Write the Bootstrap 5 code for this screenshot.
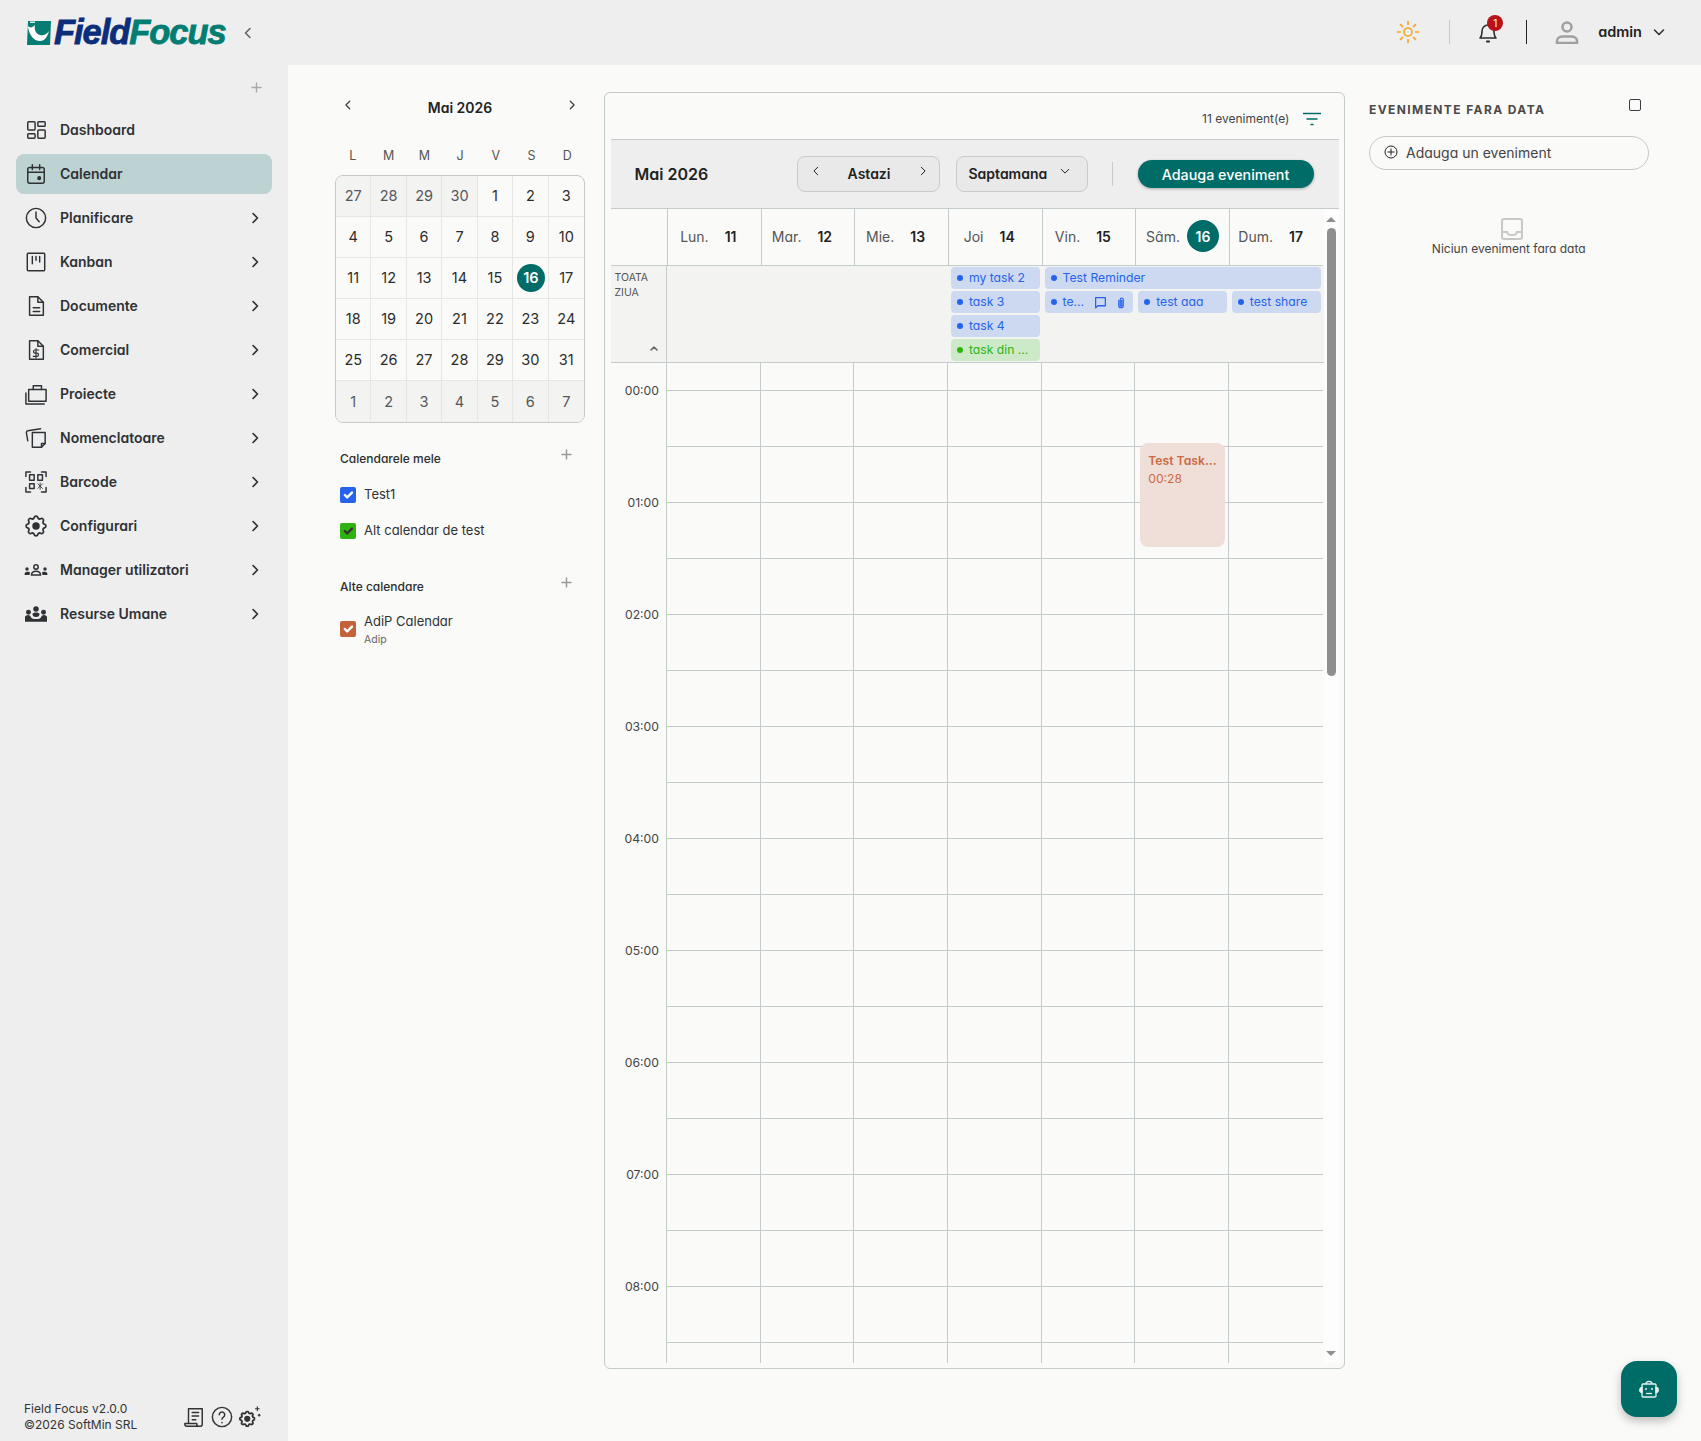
<!DOCTYPE html>
<html lang="ro">
<head>
<meta charset="UTF-8">
<meta name="viewport" content="width=device-width, initial-scale=1.0">
<title>Field Focus - Calendar</title>
<link href="https://cdn.jsdelivr.net/npm/bootstrap@5.3.0/dist/css/bootstrap.min.css" rel="stylesheet">
<style>
    html, body { height: 100%; }
    body { background: #fafaf8; color: #2b2d2f; font-family: "Inter", "Noto Sans", sans-serif; font-feature-settings: "cv11"; overflow: hidden; font-size: 14px; }
    svg { display: block; flex: none; }
    .ic { fill: none; stroke: currentColor; stroke-width: 1.6; stroke-linecap: round; stroke-linejoin: round; }

    .top-bar { height: 65px; background: #eeeeee; padding: 0 36px 0 27px; }
    .logo-word { font-family: "Liberation Sans", sans-serif; font-feature-settings: normal; font-weight: 700; font-style: italic; font-size: 34.5px; letter-spacing: -1.05px; line-height: 1; -webkit-text-stroke: .8px currentColor; }
    .logo-a { color: #0b2d7a; }
    .logo-b { color: #027d72; }
    .bar-sep { width: 1px; height: 24px; background: #c9c9c9; }
    .bar-sep-dark { background: #222; }
    .bell-badge { top: -5px; left: 10px; width: 16px; height: 16px; padding: 0; background: #b9121b; font-size: 10px; font-weight: 400; line-height: 16px; }
    .user-name { font-size: 14.5px; font-weight: 600; color: #222; }

    .page-body { height: calc(100% - 65px); }
    .side-bar { width: 288px; flex: none; background: #eeeeee; padding: 0 16px 0; }
    .side-plus { height: 45px; padding: 17px 10px 0 0; color: #a9a9a9; }
    .side-item { height: 40px; margin-bottom: 4px; padding: 0 11px 0 9px; border-radius: 8px; color: #2f3235; font-size: 14px; font-weight: 600; }
    .side-item.is-on { background: #bdd2d3; }
    .side-item .side-label { margin: -2px 0 0 13px; }
    .side-foot { padding: 0 8px 8px; font-size: 12px; line-height: 16px; font-feature-settings: normal; color: #333; }

    .mini-col { width: 315.5px; flex: none; padding-left: 47px; padding-right: 0; }
    .mini-head { height: 82px; padding: 31px 8px 0; }
    .mini-title { font-size: 14px; font-weight: 600; color: #222; padding-top: 1px; }
    .mini-week { display: grid; grid-template-columns: repeat(7, 1fr); height: 28px; font-size: 12.5px; line-height: 17px; color: #555; text-align: center; margin-bottom: 0; }
    .mini-grid { display: grid; grid-template-columns: repeat(7, 1fr); grid-auto-rows: 41px; width: 250px; border: 1px solid #c5c9c9; border-radius: 8px; overflow: hidden; background: #fafaf8; }
    .mini-cell { display: flex; align-items: center; justify-content: center; border-right: 1px solid #e6e6e5; border-bottom: 1px solid #e6e6e5; font-size: 14.5px; color: #2c2c2c; }
    .mini-cell:nth-child(7n) { border-right: 0; }
    .mini-cell:nth-last-child(-n+7) { border-bottom: 0; }
    .mini-cell.is-out { background: #f3f3f2; color: #55585a; }
    .mini-today { display: flex; align-items: center; justify-content: center; width: 28px; height: 28px; border-radius: 50%; background: #006c67; color: #fff; font-weight: 600; margin-left: 1px; }
    .cal-head { padding: 0 13px 0 5px; font-size: 12px; font-weight: 500; color: #2b2d2f; }
    .cal-plus { color: #9a9a9a; margin-top: -10px; }
    .cal-row { padding-left: 5px; font-size: 13px; color: #2f3133; }
    .cal-row .form-check-input { width: 16px; height: 16px; margin: 0 8px 0 0; border: 0; border-radius: 2px; float: none; flex: none; }
    .chk-blue { background-color: #2563eb !important; }
    .chk-green { background-color: #2fb312 !important; --bs-form-check-bg-image: url("data:image/svg+xml,%3csvg xmlns='http://www.w3.org/2000/svg' viewBox='0 0 20 20'%3e%3cpath fill='none' stroke='%23333' stroke-linecap='round' stroke-linejoin='round' stroke-width='3' d='m6 10 3 3 6-6'/%3e%3c/svg%3e") !important; }
    .chk-orange { background-color: #c4623a !important; }
    .cal-sub { font-size: 10.5px; color: #666; line-height: 14px; padding-top: 2px; }

    .week-card { width: 741px; height: 1277px; flex: none; margin-top: 27px; border: 1px solid #c3cbcb; border-radius: 6px; padding: 0 5px 0 6px; overflow: hidden; }
    .week-top { height: 46px; padding: 6px 18px 0 0; font-size: 12px; color: #444; }
    .week-tools { height: 70px; background: #eeeeee; border-top: 1px solid #c3cbcb; border-bottom: 1px solid #c3cbcb; padding: 0 24px; }
    .tools-title { font-size: 16px; font-weight: 600; color: #222; width: 162px; }
    .tool-btn { height: 36px; background: #e9e9e9; border: 1px solid #c8cccc; border-radius: 8px; font-size: 14px; font-weight: 600; color: #222; padding: 0 12px 2px; }
    .tool-btn .ic { stroke-width: 1.2; }
    .tool-today { width: 143px; margin-right: 16px; }
    .tool-view { width: 132px; }
    .tool-sep { width: 1px; height: 24px; background: #c3cbcb; margin: 0 25px 0 24px; }
    .add-btn { width: 176px; height: 28px; padding: 1px 0 0; border: 0; border-radius: 14px; background: #006c67; color: #fff; font-size: 14.3px; font-weight: 500; line-height: 27px; box-shadow: 0 1px 3px rgba(0,0,0,.3); }

    .week-wrap { height: 1154px; }
    .week-main { width: 713px; flex: none; }
    .week-grid { display: grid; grid-template-columns: 56.5px repeat(6, 93.65px) 94.6px; }
    .day-head { height: 57px; border-left: 1px solid #c3cbcb; border-bottom: 1px solid #c3cbcb; font-size: 14px; color: #555; padding: 0 12px 2px 0; }
    .gutter-head { border-left: 0; }
    .day-num { font-size: 14px; font-weight: 600; color: #222; }
    .day-circle { display: flex; align-items: center; justify-content: center; width: 32px; height: 32px; border-radius: 50%; background: #006c67; color: #fff; margin-left: -1px; }
    .allday-row { height: 97px; background: #f3f3f2; border-bottom: 1px solid #c3cbcb; }
    .allday-gutter { border-right: 1px solid #c3cbcb; padding: 4px 4px; font-size: 10.5px; line-height: 15px; color: #555; }
    .allday-up { right: 8px; bottom: 11px; color: #666; }
    .allday-events { display: grid; grid-template-columns: repeat(7, 93.65px); grid-auto-rows: 22px; row-gap: 2px; padding-top: 1px; }
    .ev-pill { height: 22px; margin: 0 2px 0 3px; padding: 0 6px; border-radius: 4px; font-size: 12.2px; line-height: 22px; background: #cdd9f1; color: #2563eb; white-space: nowrap; overflow: hidden; }
    .ev-pill.is-green { background: #cdeac8; color: #2fb312; }
    .ev-pill.is-end { margin-right: 1px; }
    .ev-dot { width: 6px; height: 6px; border-radius: 50%; background: currentColor; margin-right: 6px; flex: none; }
    .time-body { height: 1000px; overflow: hidden; }
    .time-gutter { border-right: 1px solid #c3cbcb; }
    .time-label { height: 112px; padding: 20px 7px 0 0; font-size: 12.2px; line-height: 16px; text-align: right; color: #444; }
    .time-day { position: relative; border-right: 1px solid #c3cbcb; }
    .time-day:last-child { border-right: 0; }
    .time-slot { height: 56px; border-bottom: 1px solid #c3cbcb; }
    .time-slot:first-child { height: 28px; }
    .task-block { top: 80px; left: 5px; width: 85px; height: 104px; padding: 9px 8px; background: #f0dfd8; border-radius: 8px; color: #cb6a45; font-size: 12.2px; line-height: 18px; }

    .fake-scroll { width: 15px; flex: none; background: #fdfdfd; padding-top: 8px; }
    .scroll-up { width: 0; height: 0; margin: 0 auto 6px; border: 5px solid transparent; border-top: 0; border-bottom: 5px solid #8f8f8f; }
    .scroll-thumb { width: 9px; height: 448px; margin: 0 auto; background: #8f8f8f; border-radius: 5px; }
    .scroll-down { width: 0; height: 0; margin: auto auto 7px; border: 5px solid transparent; border-bottom: 0; border-top: 5px solid #8f8f8f; }

    .undated { width: 279.5px; flex: none; margin: 27px 0 0 24.5px; }
    .undated-title { height: 44px; padding-top: 9px; font-size: 12px; font-weight: 700; letter-spacing: 1.4px; color: #4a4a4a; font-feature-settings: normal; }
    .undated-add { height: 34px; border: 1px solid #c3c9c9; border-radius: 17px; padding: 0 14px 2px; font-size: 14px; color: #444; }
    .undated-empty { margin-top: 47px; font-size: 12px; color: #444; }

    .bot-btn { position: fixed; left: 1621px; top: 1361px; width: 56px; height: 56px; padding: 0; border: 0; border-radius: 16px; background: #006c67; color: #e6f2f1; box-shadow: 0 4px 10px rgba(0,0,0,.25); }
</style>
</head>
<body>
    <svg width="0" height="0" style="position:absolute">
        <symbol id="i-gear" viewBox="2 2 20 20"><path d="M10.325 4.317c.426-1.756 2.924-1.756 3.35 0a1.724 1.724 0 0 0 2.573 1.066c1.543-.94 3.31.826 2.37 2.37a1.724 1.724 0 0 0 1.065 2.572c1.756.426 1.756 2.924 0 3.35a1.724 1.724 0 0 0-1.066 2.573c.94 1.543-.826 3.31-2.37 2.37a1.724 1.724 0 0 0-2.572 1.065c-.426 1.756-2.924 1.756-3.35 0a1.724 1.724 0 0 0-2.573-1.066c-1.543.94-3.31-.826-2.37-2.37a1.724 1.724 0 0 0-1.065-2.572c-1.756-.426-1.756-2.924 0-3.35a1.724 1.724 0 0 0 1.066-2.573c-.94-1.543.826-3.31 2.37-2.37 1 .608 2.296.07 2.572-1.065z"/><circle cx="12" cy="12" r="2.600" fill="currentColor"/></symbol>
        <symbol id="i-right" viewBox="0 0 12 12"><path d="M4 1.500 8.500 6 4 10.500"/></symbol>
        <symbol id="i-left" viewBox="0 0 12 12"><path d="M8 1.500 3.500 6 8 10.500"/></symbol>
        <symbol id="i-down" viewBox="0 0 12 12"><path d="M1.500 4 6 8.500 10.500 4"/></symbol>
        <symbol id="i-plus" viewBox="0 0 12 12"><path d="M6 1v10M1 6h10"/></symbol>
    </svg>

    <header class="top-bar d-flex align-items-center">
        <svg width="24" height="24" viewBox="0 0 24 24" style="margin-right:3px"><path d="M1 0h23l-1 24H0z" fill="#057d73"/><path d="M.800 5C2 14 7 20 13 20c4 0 7-3 9-10-3 4-6 5-9 4-4-1-6-5-5-10-3 3-5 3-7.200 1z" fill="#fff"/><path d="M3 0.500h5v1.500H3z" fill="#d7ece9"/></svg>
        <span class="logo-word"><span class="logo-a">Field</span><span class="logo-b">Focus</span></span>
        <svg width="12" height="12" class="ic" style="color:#666;margin-left:16px"><use href="#i-left"/></svg>
        <div class="ms-auto d-flex align-items-center" style="margin-top:-2px">
            <svg width="24" height="24" viewBox="0 0 24 24" class="ic" style="color:#f5a623"><circle cx="12" cy="12" r="4"/><path d="M12 1.500v3M12 19.500v3M1.500 12h3M19.500 12h3M4.600 4.600l2 2M17.400 17.400l2 2M4.600 19.400l2-2M17.400 6.600l2-2"/></svg>
            <div class="bar-sep" style="margin:0 27px 0 29px"></div>
            <div class="position-relative" style="margin-right:27px">
                <svg width="22" height="24" viewBox="0 0 22 24" class="ic" style="color:#2b2d2f"><path d="M3 18c2-2 2-4 2-7a6 6 0 0 1 12 0c0 3 0 5 2 7z"/><path d="M10 21.500h2" stroke-width="2.200"/></svg>
                <span class="badge rounded-circle position-absolute bell-badge">1</span>
            </div>
            <div class="bar-sep bar-sep-dark" style="margin-right:28px"></div>
            <svg width="24" height="24" viewBox="0 0 24 24" fill="none" stroke="#a0a0a0" stroke-width="2.500" style="margin-right:19px"><circle cx="12" cy="7" r="4.500"/><path d="M2 23v-2c0-3 3-4.500 6-4.500h8c3 0 6 1.500 6 4.500v2z"/></svg>
            <span class="user-name">admin</span>
            <svg width="12" height="12" class="ic" style="color:#333;margin-left:11px"><use href="#i-down"/></svg>
        </div>
    </header>

    <div class="page-body d-flex">
        <aside class="side-bar d-flex flex-column">
            <div class="side-plus d-flex justify-content-end"><svg width="11" height="11" class="ic" stroke-width="1"><use href="#i-plus"/></svg></div>
            <nav class="d-flex flex-column">
                <div class="side-item d-flex align-items-center">
                    <svg width="22" height="22" viewBox="0 0 24 24" class="ic"><rect x="3" y="3" width="8" height="9" rx="1"/><rect x="14" y="3" width="8" height="5" rx="1"/><rect x="3" y="16" width="8" height="5" rx="1"/><rect x="14" y="12" width="8" height="9" rx="1"/></svg>
                    <span class="side-label">Dashboard</span>
                </div>
                <div class="side-item is-on d-flex align-items-center">
                    <svg width="22" height="22" viewBox="0 0 24 24" class="ic"><rect x="3" y="5" width="18" height="17" rx="2"/><path d="M8 2v5M16 2v5M3 10h18"/><circle cx="15.500" cy="16.500" r="1.400" fill="currentColor"/></svg>
                    <span class="side-label">Calendar</span>
                </div>
                <div class="side-item d-flex align-items-center">
                    <svg width="22" height="22" viewBox="0 0 24 24" class="ic"><circle cx="12" cy="12" r="10.500"/><path d="M12 5.500V12l3.500 4"/></svg>
                    <span class="side-label">Planificare</span>
                    <svg width="12" height="12" class="ic ms-auto"><use href="#i-right"/></svg>
                </div>
                <div class="side-item d-flex align-items-center">
                    <svg width="22" height="22" viewBox="0 0 24 24" class="ic"><rect x="2.500" y="2.500" width="19" height="19" rx="1"/><path d="M8 6v8M12 6v4M16 6v6"/></svg>
                    <span class="side-label">Kanban</span>
                    <svg width="12" height="12" class="ic ms-auto"><use href="#i-right"/></svg>
                </div>
                <div class="side-item d-flex align-items-center">
                    <svg width="22" height="22" viewBox="0 0 24 24" class="ic"><path d="M5 2h9l6 6v14H5z"/><path d="M14 2v6h6M9 14h7M9 18h7"/></svg>
                    <span class="side-label">Documente</span>
                    <svg width="12" height="12" class="ic ms-auto"><use href="#i-right"/></svg>
                </div>
                <div class="side-item d-flex align-items-center">
                    <svg width="22" height="22" viewBox="0 0 24 24" class="ic"><path d="M5 2h9l6 6v14H5z"/><path d="M14 2v6h6"/><path d="M15 12h-4a1.500 1.500 0 0 0 0 3.500h2a1.500 1.500 0 0 1 0 3.500H9M12 10.500v10" stroke-width="1.300"/></svg>
                    <span class="side-label">Comercial</span>
                    <svg width="12" height="12" class="ic ms-auto"><use href="#i-right"/></svg>
                </div>
                <div class="side-item d-flex align-items-center">
                    <svg width="22" height="22" viewBox="0 0 24 24" class="ic"><rect x="4" y="7" width="19" height="13"/><path d="M9 7V3h9v4M1 11v12h20"/></svg>
                    <span class="side-label">Proiecte</span>
                    <svg width="12" height="12" class="ic ms-auto"><use href="#i-right"/></svg>
                </div>
                <div class="side-item d-flex align-items-center">
                    <svg width="22" height="22" viewBox="0 0 24 24" class="ic"><path d="M8 6h14v12l-4 4H8z"/><path d="M22 18h-4v4"/><path d="M3 15 1.500 6c0-1 .5-2 1.500-2l14-2"/></svg>
                    <span class="side-label">Nomenclatoare</span>
                    <svg width="12" height="12" class="ic ms-auto"><use href="#i-right"/></svg>
                </div>
                <div class="side-item d-flex align-items-center">
                    <svg width="22" height="22" viewBox="0 0 24 24" class="ic" stroke-width="1.300"><path d="M1 6V1h5M18 1h5v5M23 18v5h-5M6 23H1v-5"/><rect x="5" y="4" width="5" height="6"/><rect x="14" y="4" width="5" height="6"/><rect x="5" y="14" width="5" height="5"/><path d="M14 14l5 5M19 14l-5 5M16.500 13v7" stroke-width=".9"/></svg>
                    <span class="side-label">Barcode</span>
                    <svg width="12" height="12" class="ic ms-auto"><use href="#i-right"/></svg>
                </div>
                <div class="side-item d-flex align-items-center">
                    <svg width="22" height="22" class="ic" stroke-width="2.200"><use href="#i-gear"/></svg>
                    <span class="side-label">Configurari</span>
                    <svg width="12" height="12" class="ic ms-auto"><use href="#i-right"/></svg>
                </div>
                <div class="side-item d-flex align-items-center">
                    <svg width="24" height="12" viewBox="0 0 24 12" fill="#2f3235" style="margin:0 -1px"><circle cx="3" cy="5" r="1.700"/><path d="M.5 11c0-2 1-3.200 2.700-3.200S6 8.500 6 8.500L5.500 11z"/><circle cx="21" cy="5" r="1.700"/><path d="M23.500 11c0-2-1-3.200-2.700-3.200S18 8.500 18 8.500l.5 2.500z"/><circle cx="12" cy="3" r="2.200" fill="none" stroke="#2f3235" stroke-width="1.500"/><path d="M7.500 11c0-2.500 2-3.800 4.500-3.800s4.500 1.300 4.500 3.800z" fill="none" stroke="#2f3235" stroke-width="1.500"/></svg>
                    <span class="side-label">Manager utilizatori</span>
                    <svg width="12" height="12" class="ic ms-auto"><use href="#i-right"/></svg>
                </div>
                <div class="side-item d-flex align-items-center">
                    <svg width="22" height="16" viewBox="0 0 24 17" fill="#2f3235"><circle cx="12" cy="3" r="3"/><circle cx="3.800" cy="6.500" r="2.700"/><circle cx="20.200" cy="6.500" r="2.700"/><path d="M0 17v-5c0-1.500 1.500-2.500 3.500-2.500 1.500 0 2.500 1 3 2.500 1 2 2.500 2 5.500 2s4.500 0 5.500-2c.5-1.500 1.500-2.500 3-2.500 2 0 3.500 1 3.500 2.500v5z"/><path d="M8 8.500c.5-1 2-1.700 4-1.700s3.500.7 4 1.700L15 11c-1.500 1-4.500 1-6 0z"/></svg>
                    <span class="side-label">Resurse Umane</span>
                    <svg width="12" height="12" class="ic ms-auto"><use href="#i-right"/></svg>
                </div>
            </nav>
            <div class="side-foot mt-auto d-flex align-items-center justify-content-between">
                <div>Field Focus v2.0.0<br>©2026 SoftMin SRL</div>
                <div class="d-flex align-items-center" style="gap:6px;margin-right:3px">
                    <svg width="22" height="22" viewBox="0 0 24 24" class="ic"><path d="M6 19V3h15v17a2 2 0 0 1-2 2H4a2 2 0 0 1-2-2v-1h13v1a2 2 0 0 0 2 2"/><path d="M10 7h7M10 11h7M10 15h4"/></svg>
                    <svg width="22" height="22" viewBox="0 0 24 24" class="ic"><circle cx="12" cy="12" r="10.500"/><path d="M9 9.500a3 3 0 1 1 4.500 2.600c-1 .6-1.500 1.200-1.500 2.400"/><path d="M12 18v.2"/></svg>
                    <svg width="22" height="22" viewBox="0 0 24 24" class="ic" stroke-width="2"><use href="#i-gear" width="18" height="18" y="5" stroke-width="2.200"/><path d="M20 1v4M18 3h4M22 9v2M21 10h2" stroke-width="1.300"/></svg>
                </div>
            </div>
        </aside>

        <section class="mini-col">
            <div class="mini-head d-flex justify-content-between align-items-start" style="width:250px">
                <svg width="10" height="12" class="ic" style="color:#444;margin-top:3px"><use href="#i-left"/></svg>
                <span class="mini-title">Mai 2026</span>
                <svg width="10" height="12" class="ic" style="color:#444;margin-top:3px"><use href="#i-right"/></svg>
            </div>
            <div class="mini-week" style="width:250px"><span>L</span><span>M</span><span>M</span><span>J</span><span>V</span><span>S</span><span>D</span></div>
            <div class="mini-grid">
                <div class="mini-cell is-out">27</div><div class="mini-cell is-out">28</div><div class="mini-cell is-out">29</div><div class="mini-cell is-out">30</div><div class="mini-cell">1</div><div class="mini-cell">2</div><div class="mini-cell">3</div>
                <div class="mini-cell">4</div><div class="mini-cell">5</div><div class="mini-cell">6</div><div class="mini-cell">7</div><div class="mini-cell">8</div><div class="mini-cell">9</div><div class="mini-cell">10</div>
                <div class="mini-cell">11</div><div class="mini-cell">12</div><div class="mini-cell">13</div><div class="mini-cell">14</div><div class="mini-cell">15</div><div class="mini-cell"><span class="mini-today">16</span></div><div class="mini-cell">17</div>
                <div class="mini-cell">18</div><div class="mini-cell">19</div><div class="mini-cell">20</div><div class="mini-cell">21</div><div class="mini-cell">22</div><div class="mini-cell">23</div><div class="mini-cell">24</div>
                <div class="mini-cell">25</div><div class="mini-cell">26</div><div class="mini-cell">27</div><div class="mini-cell">28</div><div class="mini-cell">29</div><div class="mini-cell">30</div><div class="mini-cell">31</div>
                <div class="mini-cell is-out">1</div><div class="mini-cell is-out">2</div><div class="mini-cell is-out">3</div><div class="mini-cell is-out">4</div><div class="mini-cell is-out">5</div><div class="mini-cell is-out">6</div><div class="mini-cell is-out">7</div>
            </div>
            <div class="cal-head d-flex justify-content-between align-items-center" style="width:250px;margin-top:26px;height:20px">
                <span>Calendarele mele</span>
                <svg width="11" height="11" class="ic cal-plus" stroke-width="1"><use href="#i-plus"/></svg>
            </div>
            <div class="cal-row d-flex align-items-center" style="margin-top:16px;height:20px">
                <input class="form-check-input chk-blue" type="checkbox" checked aria-label="Test1"><span>Test1</span>
            </div>
            <div class="cal-row d-flex align-items-center" style="margin-top:16px;height:20px">
                <input class="form-check-input chk-green" type="checkbox" checked aria-label="Alt calendar de test"><span>Alt calendar de test</span>
            </div>
            <div class="cal-head d-flex justify-content-between align-items-center" style="width:250px;margin-top:36px;height:20px">
                <span>Alte calendare</span>
                <svg width="11" height="11" class="ic cal-plus" stroke-width="1"><use href="#i-plus"/></svg>
            </div>
            <div class="cal-row d-flex align-items-center" style="margin-top:14px">
                <input class="form-check-input chk-orange" type="checkbox" checked aria-label="AdiP Calendar">
                <div><div style="line-height:20px">AdiP Calendar</div><div class="cal-sub">Adip</div></div>
            </div>
        </section>

        <main class="week-card">
            <div class="week-top d-flex align-items-center justify-content-end">
                <span style="margin-right:13px">11 eveniment(e)</span>
                <svg width="18" height="14" viewBox="0 0 18 14" fill="none" stroke="#006c67" stroke-width="1.600"><path d="M0 1.500h18M3.500 7h11M7.500 12.500h3"/></svg>
            </div>
            <div class="week-tools d-flex align-items-center">
                <div class="tools-title">Mai 2026</div>
                <div class="tool-btn tool-today d-flex align-items-center justify-content-between">
                    <svg width="10" height="12" class="ic" style="margin:-4px 0 0 1px"><use href="#i-left"/></svg>
                    <span>Astazi</span>
                    <svg width="10" height="12" class="ic" style="margin:-4px -1px 0 0"><use href="#i-right"/></svg>
                </div>
                <div class="tool-btn tool-view d-flex align-items-center justify-content-between">
                    <span>Saptamana</span>
                    <svg width="12" height="10" class="ic" style="margin:-4px 4px 0 0"><use href="#i-down"/></svg>
                </div>
                <div class="tool-sep"></div>
                <button type="button" class="btn add-btn">Adauga eveniment</button>
            </div>
            <div class="week-wrap d-flex">
                <div class="week-main">
                    <div class="week-grid">
                        <div class="day-head gutter-head"></div>
                        <div class="day-head d-flex align-items-center justify-content-center gap-3"><span>Lun.</span><span class="day-num">11</span></div>
                        <div class="day-head d-flex align-items-center justify-content-center gap-3"><span>Mar.</span><span class="day-num">12</span></div>
                        <div class="day-head d-flex align-items-center justify-content-center gap-3"><span>Mie.</span><span class="day-num">13</span></div>
                        <div class="day-head d-flex align-items-center justify-content-center gap-3"><span>Joi</span><span class="day-num">14</span></div>
                        <div class="day-head d-flex align-items-center justify-content-center gap-3"><span>Vin.</span><span class="day-num">15</span></div>
                        <div class="day-head d-flex align-items-center justify-content-center gap-2 pe-0"><span>Sâm.</span><span class="day-num day-circle">16</span></div>
                        <div class="day-head d-flex align-items-center justify-content-center gap-3"><span>Dum.</span><span class="day-num">17</span></div>
                    </div>
                    <div class="week-grid allday-row" style="grid-template-columns:56.5px 1fr">
                        <div class="allday-gutter position-relative">TOATA<br>ZIUA
                            <svg width="8" height="6" viewBox="0 0 8 6" class="ic allday-up position-absolute" stroke-width="1"><path d="M1 5l3-3 3 3"/></svg>
                        </div>
                        <div class="allday-events">
                            <div class="ev-pill d-flex align-items-center" style="grid-area:1/4/2/5"><i class="ev-dot"></i>my task 2</div>
                            <div class="ev-pill is-end d-flex align-items-center" style="grid-area:1/5/2/8"><i class="ev-dot"></i>Test Reminder</div>
                            <div class="ev-pill d-flex align-items-center" style="grid-area:2/4/3/5"><i class="ev-dot"></i>task 3</div>
                            <div class="ev-pill d-flex align-items-center" style="grid-area:2/5/3/6"><i class="ev-dot"></i>te...
                                <svg width="13" height="13" viewBox="0 0 16 16" class="ic ms-auto" stroke-width="1.200"><path d="M2 2h12v10H5l-3 2.500z"/></svg>
                                <svg width="12" height="13" viewBox="0 0 16 16" class="ic" stroke-width="1.200" style="margin-left:8px"><path d="M5 5v7a3 3 0 0 0 6 0V4a2 2 0 0 0-4 0v8a.8.8 0 0 0 2 0V5"/></svg>
                            </div>
                            <div class="ev-pill d-flex align-items-center" style="grid-area:2/6/3/7"><i class="ev-dot"></i>test aaa</div>
                            <div class="ev-pill is-end d-flex align-items-center" style="grid-area:2/7/3/8"><i class="ev-dot"></i>test share</div>
                            <div class="ev-pill d-flex align-items-center" style="grid-area:3/4/4/5"><i class="ev-dot"></i>task 4</div>
                            <div class="ev-pill is-green d-flex align-items-center" style="grid-area:4/4/5/5"><i class="ev-dot"></i>task din ...</div>
                        </div>
                    </div>
                    <div class="week-grid time-body" id="timeBody"></div>
                </div>
                <div class="fake-scroll d-flex flex-column">
                    <div class="scroll-up"></div>
                    <div class="scroll-thumb"></div>
                    <div class="scroll-down"></div>
                </div>
            </div>
        </main>

        <aside class="undated">
            <div class="undated-title d-flex justify-content-between">
                <span>EVENIMENTE FARA DATA</span>
                <svg width="13" height="13" viewBox="0 0 13 13" fill="none" stroke="#3a3f44" style="margin:-2px 7px 0 0"><rect x=".5" y=".5" width="11" height="11" rx="1.500"/></svg>
            </div>
            <div class="undated-add d-flex align-items-center">
                <svg width="14" height="14" viewBox="0 0 14 14" fill="none" stroke="#222" stroke-width="1"><circle cx="7" cy="7" r="6"/><path d="M7 3.500v7M3.500 7h7"/></svg>
                <span style="margin-left:8px">Adauga un eveniment</span>
            </div>
            <div class="undated-empty d-flex flex-column align-items-center">
                <svg width="22" height="22" viewBox="0 0 22 22" fill="none" stroke="#c8c8c8" stroke-width="2" style="margin-left:6px;margin-top:1px"><rect x="1" y="1" width="20" height="20" rx="2"/><path d="M1 14h5c1 3 2 3 5 3s4 0 5-3h5"/></svg>
                <span>Niciun eveniment fara data</span>
            </div>
        </aside>
    </div>

    <button type="button" class="btn bot-btn d-flex align-items-center justify-content-center" aria-label="Asistent">
        <svg width="22" height="22" viewBox="0 0 22 22" fill="none" stroke="currentColor" stroke-width="1.300"><rect x="4" y="6" width="14" height="13" rx="1"/><path d="M8 6c0-3.500 6-3.500 6 0"/><path d="M4 9.500c-3 0-3 5 0 5zM18 9.500c3 0 3 5 0 5z" fill="currentColor"/><path d="M8 15.500h6"/><circle cx="8" cy="11" r="1" fill="currentColor" stroke="none"/><circle cx="14" cy="11" r="1" fill="currentColor" stroke="none"/></svg>
    </button>

    <script src="https://cdn.jsdelivr.net/npm/bootstrap@5.3.0/dist/js/bootstrap.bundle.min.js"></script>
    <script>
        // week grid, half hour slots
        const body = document.getElementById('timeBody');
        let html = '<div class="time-gutter">';
        for (let h = 0; h < 9; h++) {
            html += '<div class="time-label">0' + h + ':00</div>';
        }
        html += '</div>';
        for (let d = 0; d < 7; d++) {
            html += '<div class="time-day">';
            for (let s = 0; s < 19; s++) html += '<div class="time-slot"></div>';
            if (d === 5) {
                html += '<div class="task-block position-absolute"><div class="fw-semibold text-nowrap">Test Task...</div><div>00:28</div></div>';
            }
            html += '</div>';
        }
        body.innerHTML = html;
    </script>
</body>
</html>
